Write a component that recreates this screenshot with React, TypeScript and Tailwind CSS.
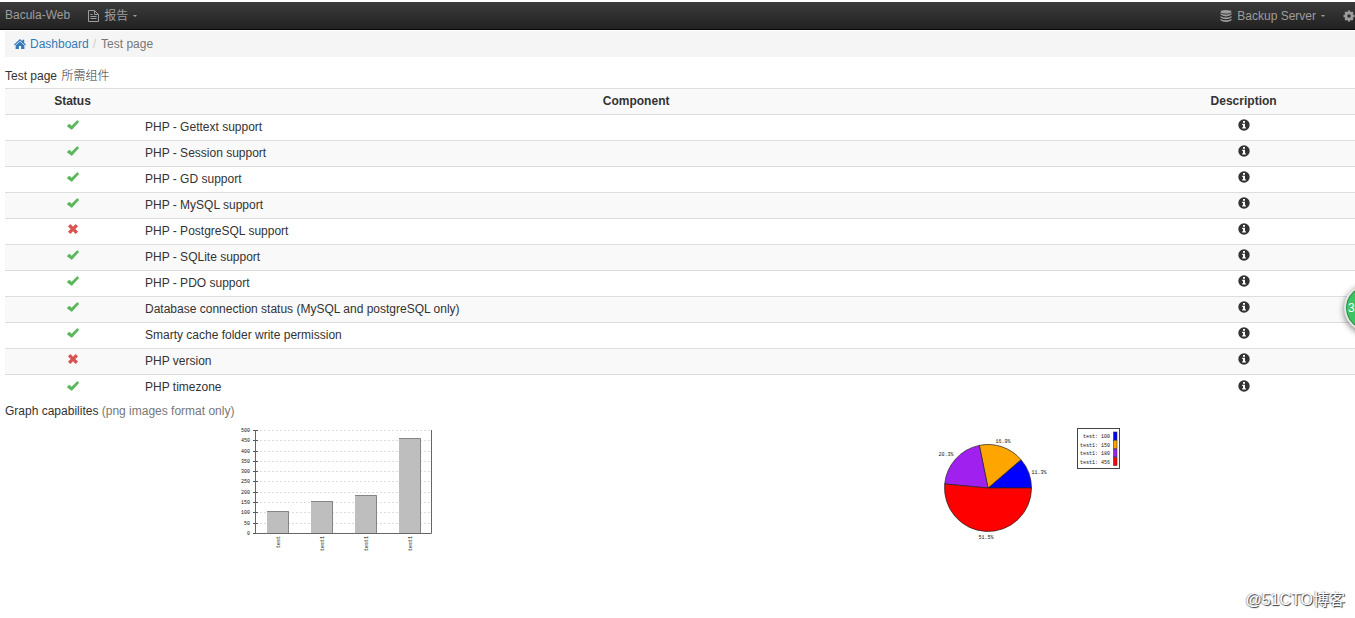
import type { ReactNode } from 'react';

const checks = [
  { name: 'PHP - Gettext support', ok: true },
  { name: 'PHP - Session support', ok: true },
  { name: 'PHP - GD support', ok: true },
  { name: 'PHP - MySQL support', ok: true },
  { name: 'PHP - PostgreSQL support', ok: false },
  { name: 'PHP - SQLite support', ok: true },
  { name: 'PHP - PDO support', ok: true },
  { name: 'Database connection status (MySQL and postgreSQL only)', ok: true },
  { name: 'Smarty cache folder write permission', ok: true },
  { name: 'PHP version', ok: false },
  { name: 'PHP timezone', ok: true },
];

const bars = [
  { label: 'test', value: 100 },
  { label: 'test1', value: 150 },
  { label: 'test1', value: 180 },
  { label: 'test1', value: 456 },
];

const slices = [
  { label: 'test', value: 100, color: '#0000ff', percent: '11.3%', x: 134, y: 50 },
  { label: 'test1', value: 150, color: '#ffa500', percent: '16.9%', x: 98, y: 19 },
  { label: 'test1', value: 180, color: '#a020f0', percent: '20.3%', x: 41, y: 32 },
  { label: 'test1', value: 456, color: '#ff0000', percent: '51.5%', x: 81, y: 115 },
];

const CheckIcon = () => (
  <svg role="img" aria-label="OK" viewBox="0 0 12 10" className="inline-block w-3 h-2.5 fill-[#5cb85c]">
    <path d="M0 5.9 1.9 4.1q.4-.3.8 0L4.6 5.8 9.9.4q.4-.4.9 0l1 1q.3.4 0 .8L5.2 9.6q-.5.5-1 0L.1 6.6q-.3-.3-.1-.7Z" />
  </svg>
);

const CrossIcon = () => (
  <svg role="img" aria-label="Failed" viewBox="0 0 10 10" className="inline-block w-2.5 h-2.5 fill-[#d9534f]">
    <path d="M.3 2.1 2.1.3q.3-.3.6 0L5 2.7 7.3.3q.3-.3.6 0l1.8 1.8q.3.3 0 .6L7.3 5l2.4 2.3q.3.3 0 .6L7.9 9.7q-.3.3-.6 0L5 7.3 2.7 9.7q-.3.3-.6 0L.3 7.9q-.3-.3 0-.6L2.7 5 .3 2.7q-.3-.3 0-.6Z" />
  </svg>
);

const InfoIcon = () => (
  <svg role="img" aria-label="Info" viewBox="0 0 12 12" className="inline-block w-3 h-3">
    <circle cx="6" cy="6" r="5.7" fill="#333" />
    <path fill="#fff" d="M5 2h2v1.7H5ZM4.2 4.7H7v3.6h.9v1.3H4.2V8.3H5V6h-.8Z" />
  </svg>
);

const HomeIcon = () => (
  <svg viewBox="0 0 12 11" className="w-3 h-[11px] fill-current">
    <path d="M6 0 8.4 2.200V.8h1.800v3.100L12 5.600l-.7.8L6 1.800.7 6.400 0 5.600Z" />
    <path d="m6 2.600 4.400 3.800V10H7.100V7H4.900v3H1.600V6.400Z" />
  </svg>
);

const FileIcon = () => (
  <svg viewBox="0 0 11 12" className="w-[11px] h-3 fill-none stroke-current">
    <path d="M.5.5h6l4 4v7H.5ZM6.5.5v4h4M2.5 4.5h2M2.5 6.5h6M2.5 8.5h6" />
  </svg>
);

const DatabaseIcon = () => (
  <svg viewBox="0 0 12 12" className="w-3 h-3 fill-current">
    <ellipse cx="6" cy="1.8" rx="5.5" ry="1.8" />
    <path d="M.5 3q2 1.6 5.5 1.6T11.5 3v1.6Q9.5 6.4 6 6.4T.5 4.6ZM.5 5.9Q2.5 7.5 6 7.5t5.5-1.6v1.5Q9.5 9.2 6 9.2T.5 7.4ZM.5 8.7q2 1.6 5.5 1.6t5.5-1.6v1.5Q9.5 12 6 12T.5 10.2Z" />
  </svg>
);

const CogIcon = () => (
  <svg viewBox="0 0 12 12" className="w-3 h-3 shrink-0">
    <path className="stroke-current" strokeWidth="2.4" d="M6 .5v11M.5 6h11M2.2 2.2l7.6 7.6M9.8 2.2 2.2 9.8" />
    <circle cx="6" cy="6" r="4.2" className="fill-current" />
    <circle cx="6" cy="6" r="1.8" fill="#303030" />
  </svg>
);

const Caret = () => <span className="border-x-2 border-t-2 border-x-transparent border-t-current" />;

const NavButton = ({ icon, children }: { icon: ReactNode; children: ReactNode }) => (
  <button type="button" className="flex items-center gap-[5px]">
    {icon}
    <span>{children}</span>
    <Caret />
  </button>
);

const Header = () => (
  <header className="mt-0.5 h-7 border-b border-[#080808] bg-linear-to-b from-[#3c3c3c] to-[#222] text-[#9d9d9d]">
    <nav className="flex h-full items-center justify-between overflow-hidden pl-[5px]">
      <div className="flex items-center gap-[18px]">
        <a href="#" className="pb-0.5">Bacula-Web</a>
        <NavButton icon={<FileIcon />}>报告</NavButton>
      </div>
      <div className="flex items-center gap-[18px]">
        <NavButton icon={<DatabaseIcon />}>Backup Server</NavButton>
        <button type="button" aria-label="Settings">
          <CogIcon />
        </button>
      </div>
    </nav>
  </header>
);

const ChecksTable = () => (
  <table className="w-full table-fixed border-collapse text-center">
    <thead>
      <tr className="h-[26px] border-y border-[#ddd] bg-[#f9f9f9]">
        <th className="w-[10%] pb-px">Status</th>
        <th className="pb-px">Component</th>
        <th className="w-[16.5%] pb-px">Description</th>
      </tr>
    </thead>
    <tbody>
      {checks.map((check) => (
        <tr key={check.name} className="h-[26px] border-t border-[#ddd] even:bg-[#f9f9f9]">
          <td className="pb-1.5">{check.ok ? <CheckIcon /> : <CrossIcon />}</td>
          <td className="px-[5px] pb-0.5 text-left">{check.name}</td>
          <td className="pb-1.5"><InfoIcon /></td>
        </tr>
      ))}
    </tbody>
  </table>
);

const BarChart = () => {
  const bottom = 109;
  const toY = (value: number) => bottom - Math.round((value * 103) / 500);
  const ticks = Array.from({ length: 11 }, (_, i) => i * 50);

  return (
    <svg role="img" aria-label="Bar graph" viewBox="0 0 225 130" className="w-[225px] h-[130px] font-['Liberation_Mono',monospace] text-[5px]" fill="#111">
      {ticks.map((tick) => (
        <g key={tick}>
          <path d={`M26 ${toY(tick) + 0.5}H201`} stroke="#ddd" strokeDasharray="2 2" />
          <path d={`M23 ${toY(tick) + 0.5}H28`} stroke="#555" />
          <text x="20" y={toY(tick) + 2} textAnchor="end">{tick}</text>
        </g>
      ))}
      <path d="M25.5 6V109.5H201.5V6" fill="none" stroke="#666" />
      {bars.map((bar, i) => {
        const x = 37 + i * 44;
        const y = toY(bar.value) - 1;
        return (
          <g key={i}>
            <path d={`M${x} ${y}h22V109h-22Z`} fill="#bebebe" />
            <path d={`M${x} ${y + 0.5}h21.5V109`} fill="none" stroke="#858585" />
            <text transform={`translate(${x + 13} 112) rotate(-90)`} textAnchor="end">
              {bar.label}
            </text>
          </g>
        );
      })}
    </svg>
  );
};

const PieChart = () => {
  const total = slices.reduce((sum, slice) => sum + slice.value, 0);
  const radius = 43.5;
  const point = (value: number) => {
    const angle = (value / total) * Math.PI * 2;
    return `${83 + radius * Math.cos(angle)} ${64 - radius * Math.sin(angle)}`;
  };
  let start = 0;

  return (
    <svg role="img" aria-label="Pie graph" viewBox="0 0 225 130" className="w-[225px] h-[130px] font-['Liberation_Mono',monospace] text-[5px]" fill="#111">
      {slices.map((slice, i) => {
        const from = start;
        start += slice.value;
        const large = slice.value > total / 2 ? 1 : 0;
        return (
          <g key={i}>
            <path
              d={`M83 64L${point(from)}A${radius} ${radius} 0 ${large} 0 ${point(start)}Z`}
              fill={slice.color}
              stroke="#222"
              strokeWidth=".7"
            />
            <text x={slice.x} y={slice.y} textAnchor="middle">{slice.percent}</text>
          </g>
        );
      })}
      <rect x="172.5" y="4.5" width="42" height="40" fill="#fff" stroke="#444" />
      {slices.map((slice, i) => (
        <g key={i}>
          <text x="205" y={14 + i * 8.5} textAnchor="end">
            {slice.label}: {slice.value}
          </text>
          <rect x="208.5" y={8 + i * 8.5} width="3.5" height="8" fill={slice.color} stroke="#333" strokeWidth=".6" />
        </g>
      ))}
    </svg>
  );
};

const App = () => (
  <div className="relative min-h-screen overflow-hidden bg-white font-['Liberation_Sans',Arial,'Noto_Sans_CJK_SC',sans-serif] text-xs text-[#333]">
    <Header />
    <main className="pl-[5px]">
      <nav aria-label="Breadcrumb" className="mt-px flex h-[26px] items-center bg-[#f5f5f5] pl-[9px]">
        <a href="#" className="flex items-center gap-1 text-[#337ab7]">
          <HomeIcon />
          Dashboard
        </a>
        <span className="pr-0.5 pl-1 text-[#ccc]">/</span>
        <span className="pl-[3px] text-[#777]">Test page</span>
      </nav>
      <h1 className="mt-[11px] mb-1 leading-4">
        Test page <span className="pl-px font-light">所需组件</span>
      </h1>
      <ChecksTable />
      <h2 className="mt-0.5 leading-4">
        Graph capabilites <span className="text-[#777]">(png images format only)</span>
      </h2>
      <div className="mt-[5px] grid grid-cols-2 justify-items-center">
        <BarChart />
        <PieChart />
      </div>
    </main>
    <button
      type="button"
      className="absolute top-[284px] -right-[37px] h-12 w-12 rounded-full border-2 border-[#e4e4e4] bg-[#3cc463] pl-0.5 text-left text-white shadow-[0_2px_6px_rgba(0,0,0,0.5),inset_0_0_0_1px_#278c45]"
    >
      3
    </button>
    <p className="absolute right-2.5 bottom-1.5 text-base text-white [text-shadow:1px_1px_1px_#333,-1px_0_1px_#aaa]">
      @51CTO博客
    </p>
  </div>
);

export default App;
